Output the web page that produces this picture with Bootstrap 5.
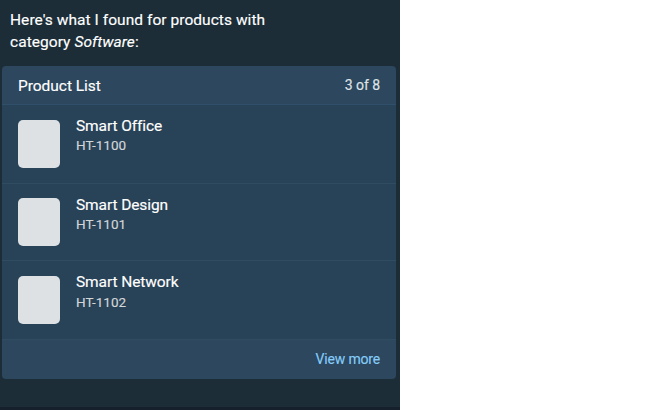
<!DOCTYPE html>
<html lang="en">
<head>
<meta charset="utf-8">
<title>Product List</title>
<link href="https://cdn.jsdelivr.net/npm/bootstrap@5.3.0/dist/css/bootstrap.min.css" rel="stylesheet">
<style>
body{background:#fff;font-family:Roboto,"Liberation Sans",sans-serif;overflow:hidden;-webkit-text-stroke:.15px currentColor}
.chat{width:400px;height:410px;background:#1c2d38;color:#fff;padding:0 4px 0 2px;border-bottom:3px solid #16202d}
.intro{font-size:15.5px;line-height:22px;padding:9px 8px 0;height:66px;letter-spacing:.05px}
.panel{background:#2c475e;border-radius:4px;height:313px;overflow:hidden}
.panel-top{height:39px;padding:2px 16px 0;border-bottom:1px solid #2f4f6b}
.panel-top h1{font-size:15.5px;line-height:20px;margin:0;font-weight:400;letter-spacing:-.04px}
.count{font-size:14px;line-height:20px;color:#dfe4e8;margin-top:-3px;letter-spacing:-.05px}
.product{height:79px;padding:15px 16px;background:#284257;border-bottom:1px solid #2f4c61}
.product:nth-of-type(2){height:77px;padding-top:14px}
.thumb{width:42px;height:48px;border-radius:5px;background:#dde1e4}
.words{margin-top:-4px}
.product:nth-of-type(2) .words{margin-top:-3px}
.title{font-size:15.5px;line-height:20px;letter-spacing:-.1px}
.sku{font-size:13.5px;line-height:18px;color:#d2d6d9;letter-spacing:.02px}
.product:nth-of-type(3) .sku{line-height:20px}
.more{height:38px;padding:0 16px;font-size:14px;color:#85ccf8;text-decoration:none;letter-spacing:-.18px}
</style>
<script src="https://cdn.jsdelivr.net/npm/bootstrap@5.3.0/dist/js/bootstrap.bundle.min.js"></script>
</head>
<body>
<main class="chat">
<p class="intro mb-0">Here's what I found for products with<br>category <em>Software</em>:</p>
<section class="panel">
<header class="panel-top d-flex justify-content-between align-items-center"><h1>Product List</h1><span class="count">3 of 8</span></header>
<div class="product d-flex gap-3"><div class="thumb"></div><div class="words"><div class="title">Smart Office</div><div class="sku">HT-1100</div></div></div>
<div class="product d-flex gap-3"><div class="thumb"></div><div class="words"><div class="title">Smart Design</div><div class="sku">HT-1101</div></div></div>
<div class="product d-flex gap-3"><div class="thumb"></div><div class="words"><div class="title">Smart Network</div><div class="sku">HT-1102</div></div></div>
<a class="more d-flex justify-content-end align-items-center" href="#">View more</a>
</section>
</main>
</body>
</html>
